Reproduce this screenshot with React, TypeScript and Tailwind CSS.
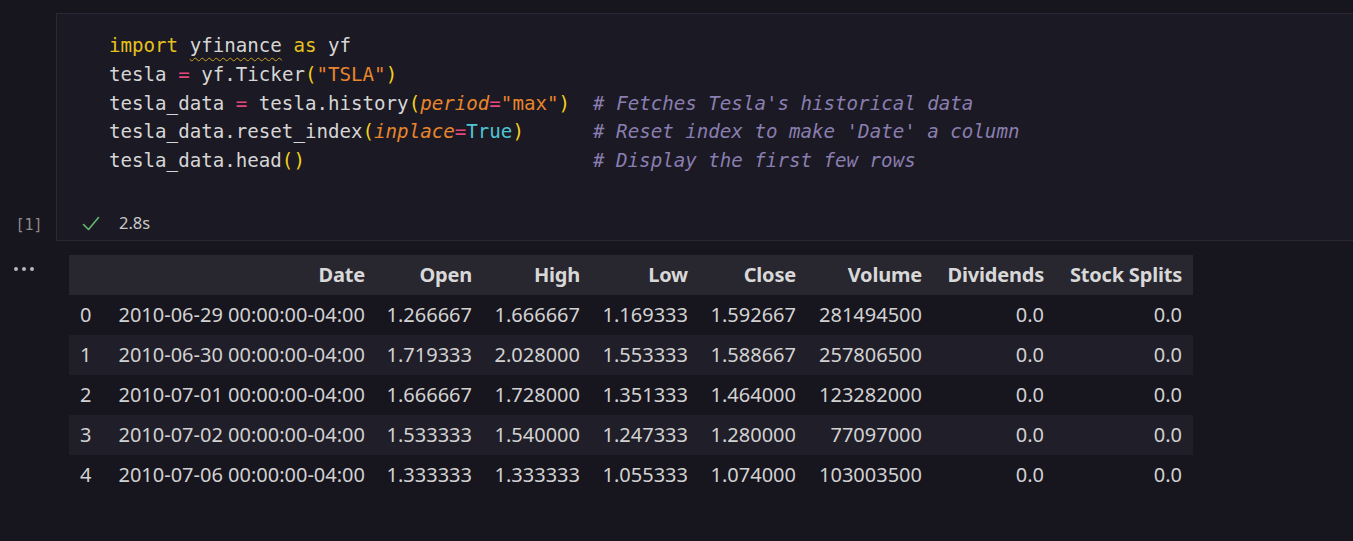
import React from 'react';

const codeFont = { fontFamily: '"DejaVu Sans Mono", "Liberation Mono", monospace' };
const uiFont = { fontFamily: '"Noto Sans", "Open Sans", sans-serif' };

type Row = [string, string, string, string, string, string, string, string, string];

const headers = ['Date', 'Open', 'High', 'Low', 'Close', 'Volume', 'Dividends', 'Stock Splits'];

const rows: Row[] = [
  ['0', '2010-06-29 00:00:00-04:00', '1.266667', '1.666667', '1.169333', '1.592667', '281494500', '0.0', '0.0'],
  ['1', '2010-06-30 00:00:00-04:00', '1.719333', '2.028000', '1.553333', '1.588667', '257806500', '0.0', '0.0'],
  ['2', '2010-07-01 00:00:00-04:00', '1.666667', '1.728000', '1.351333', '1.464000', '123282000', '0.0', '0.0'],
  ['3', '2010-07-02 00:00:00-04:00', '1.533333', '1.540000', '1.247333', '1.280000', '77097000', '0.0', '0.0'],
  ['4', '2010-07-06 00:00:00-04:00', '1.333333', '1.333333', '1.055333', '1.074000', '103003500', '0.0', '0.0'],
];

const gridCols = 'grid grid-cols-[35px_272px_107px_108px_108px_108px_126px_122px_138px]';

const Op = ({ children }: { children: React.ReactNode }) => (
  <span className="text-[#e2467c]">{children}</span>
);
const Paren = ({ children }: { children: React.ReactNode }) => (
  <span className="text-[#f2d01e]">{children}</span>
);
const Comment = ({ children }: { children: React.ReactNode }) => (
  <span className="italic text-[#8a7eb0]">{children}</span>
);

const CodeCell: React.FC = () => (
  <div className="flex">
    <div className="w-[56px] shrink-0 flex items-end justify-center pb-[6px]">
      <span className="text-[15px] text-[#8c8c8c] leading-[20px] pl-[2px]" style={codeFont}>[1]</span>
    </div>
    <div className="flex-1 -mr-4 border border-[#2b2735] bg-[#1b1923]">
      <pre
        className="pl-[52px] pt-[18px] pb-[32px] text-[19.15px] leading-[28.75px] text-[#d6d6d6] whitespace-pre"
        style={codeFont}
      >
        <div>
          <span className="text-[#e6c11e]">import</span>{' '}
          <span className="underline decoration-wavy decoration-[#c9a227] underline-offset-[5px] decoration-1">yfinance</span>{' '}
          <span className="text-[#e6c11e]">as</span> yf
        </div>
        <div>
          tesla <Op>=</Op> yf.Ticker<Paren>(</Paren>
          <span className="text-[#e8852c]">"TSLA"</span>
          <Paren>)</Paren>
        </div>
        <div>
          tesla_data <Op>=</Op> tesla.history<Paren>(</Paren>
          <span className="italic text-[#e8852c]">period</span>
          <Op>=</Op>
          <span className="text-[#e8852c]">"max"</span>
          <Paren>)</Paren>
          {'  '}
          <Comment># Fetches Tesla's historical data</Comment>
        </div>
        <div>
          tesla_data.reset_index<Paren>(</Paren>
          <span className="italic text-[#e8852c]">inplace</span>
          <Op>=</Op>
          <span className="text-[#4fc6d4]">True</span>
          <Paren>)</Paren>
          {'      '}
          <Comment># Reset index to make 'Date' a column</Comment>
        </div>
        <div>
          tesla_data.head<Paren>()</Paren>
          {'                         '}
          <Comment># Display the first few rows</Comment>
        </div>
      </pre>
      <div className="flex items-center h-[32px] pl-[25px]" style={uiFont}>
        <svg width="18" height="16" viewBox="0 0 18 16" fill="none" className="mr-[19px]">
          <path d="M1.5 8.5 L6.5 13.5 L16.5 1.5" stroke="#63b96f" strokeWidth="1.6" strokeLinecap="round" strokeLinejoin="round" />
        </svg>
        <span className="text-[16.5px] text-[#c8c8c8]">2.8s</span>
      </div>
    </div>
  </div>
);

const OutputTable: React.FC = () => (
  <div className="flex mt-[14px]">
    <div className="w-[69px] shrink-0 pt-[12px] pl-[14px]">
      <div className="flex gap-[4px]">
        <span className="w-[4px] h-[4px] rounded-full bg-[#b8b8b8]" />
        <span className="w-[4px] h-[4px] rounded-full bg-[#b8b8b8]" />
        <span className="w-[4px] h-[4px] rounded-full bg-[#b8b8b8]" />
      </div>
    </div>
    <div className="text-[20px] text-[#d2d2d2] whitespace-nowrap" style={uiFont}>
      <div className={`${gridCols} h-[40px] items-center bg-[#28262f] font-bold text-[#d8d8d8]`}>
        <div />
        {headers.map((h) => (
          <div key={h} className="text-right pr-[11px] tracking-[-0.2px]">{h}</div>
        ))}
      </div>
      {rows.map((r, i) => (
        <div
          key={r[0]}
          className={`${gridCols} h-[40px] items-center ${i % 2 === 1 ? 'bg-[#201e28]' : ''}`}
        >
          <div className="pl-[11px]">{r[0]}</div>
          {r.slice(1).map((v, j) => (
            <div key={j} className="text-right pr-[11px]">{v}</div>
          ))}
        </div>
      ))}
    </div>
  </div>
);

export default function App() {
  return (
    <div className="w-full h-[541px] overflow-hidden bg-[#17151e] pt-[13px]">
      <CodeCell />
      <OutputTable />
    </div>
  );
}
